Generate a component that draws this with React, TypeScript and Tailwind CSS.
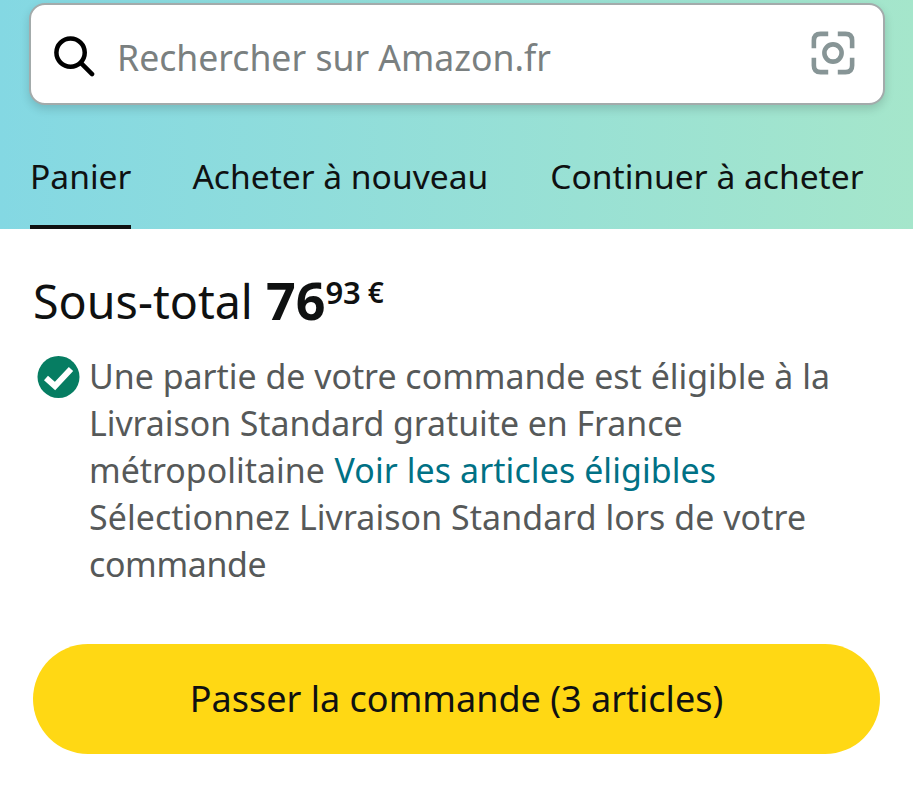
export default function App() {
  return (
    <div className="w-[913px] h-[800px] bg-white overflow-hidden font-['Noto_Sans',sans-serif]">
      <header className="h-[229px] bg-gradient-to-r from-[#84d8e3] to-[#a5e6cb] pl-[29px] pt-[3px] flex flex-col">
        <div className="w-[856px] h-[102px] bg-white rounded-[16px] border-2 border-[#a3abab] shadow-[0_4px_10px_rgba(0,0,0,0.15)] flex items-center pl-[21px] pr-[28px]">
          <svg width="43" height="43" viewBox="0 0 44 44" fill="none" stroke="#000" strokeWidth="4.6" className="shrink-0 mt-[2px]">
            <circle cx="19" cy="19" r="14.5" />
            <path d="M29.5 29.5 L41 41" strokeLinecap="round" />
          </svg>
          <span className="ml-[22px] text-[35.6px] text-[#7a8080] flex-1 mt-[8px]">Rechercher sur Amazon.fr</span>
          <svg width="44" height="44" viewBox="0 0 46 46" fill="none" stroke="#879596" strokeWidth="4.8" className="shrink-0 mt-[-3px]">
            <path d="M18 3 H10 Q3 3 3 10 V18" />
            <path d="M28 3 H36 Q43 3 43 10 V18" />
            <path d="M3 28 V36 Q3 43 10 43 H18" />
            <path d="M43 28 V36 Q43 43 36 43 H28" />
            <circle cx="23" cy="23" r="9" />
          </svg>
        </div>
        <nav className="flex gap-[62px] mt-auto ml-[1px] text-[33.6px] text-[#0f1111]">
          <div className="h-[94px] border-b-[4px] border-[#0f1111] flex items-center pb-[8px]">Panier</div>
          <div className="h-[94px] border-b-[4px] border-transparent flex items-center pb-[8px] ml-[-1px]">Acheter à nouveau</div>
          <div className="h-[94px] border-b-[4px] border-transparent flex items-center pb-[8px]">Continuer à acheter</div>
        </nav>
      </header>
      <main className="px-[33px]">
        <div className="flex items-start mt-[40px] h-[64px] text-[#0f1111]">
          <span className="text-[46.6px] leading-[64px]">Sous-total</span>
          <span className="ml-[13px] text-[52px] leading-[62px] font-bold">76</span>
          <span className="text-[31px] leading-[47px] font-semibold">93</span>
          <span className="ml-[7px] text-[28px] leading-[47px] font-semibold">€</span>
        </div>
        <div className="flex mt-[20px]">
          <svg width="44" height="44" viewBox="0 0 44 44" className="shrink-0 ml-[4px] mt-[2px]">
            <circle cx="21.5" cy="22" r="21" fill="#067d62" />
            <path d="M9 23 L18 31 L34 14" fill="none" stroke="#fff" strokeWidth="6" />
          </svg>
          <p className="ml-[8px] text-[33.9px] leading-[47px] text-[#565959] w-[790px]">
            Une partie de votre commande est éligible à la <span className="tracking-[-0.05px]">Livraison Standard gratuite en France</span> métropolitaine <span className="ml-[1px] tracking-[0.1px] text-[#007185]">Voir les articles éligibles</span><br />
            <span className="tracking-[0.09px]">Sélectionnez Livraison Standard lors de votre</span> <span className="tracking-[-0.35px]">commande</span>
          </p>
        </div>
        <button className="mt-[56px] w-[847px] h-[110px] rounded-full bg-[#ffd814] text-[36px] text-[#0f1111] flex items-center justify-center">
          Passer la commande (3 articles)
        </button>
      </main>
    </div>
  );
}
